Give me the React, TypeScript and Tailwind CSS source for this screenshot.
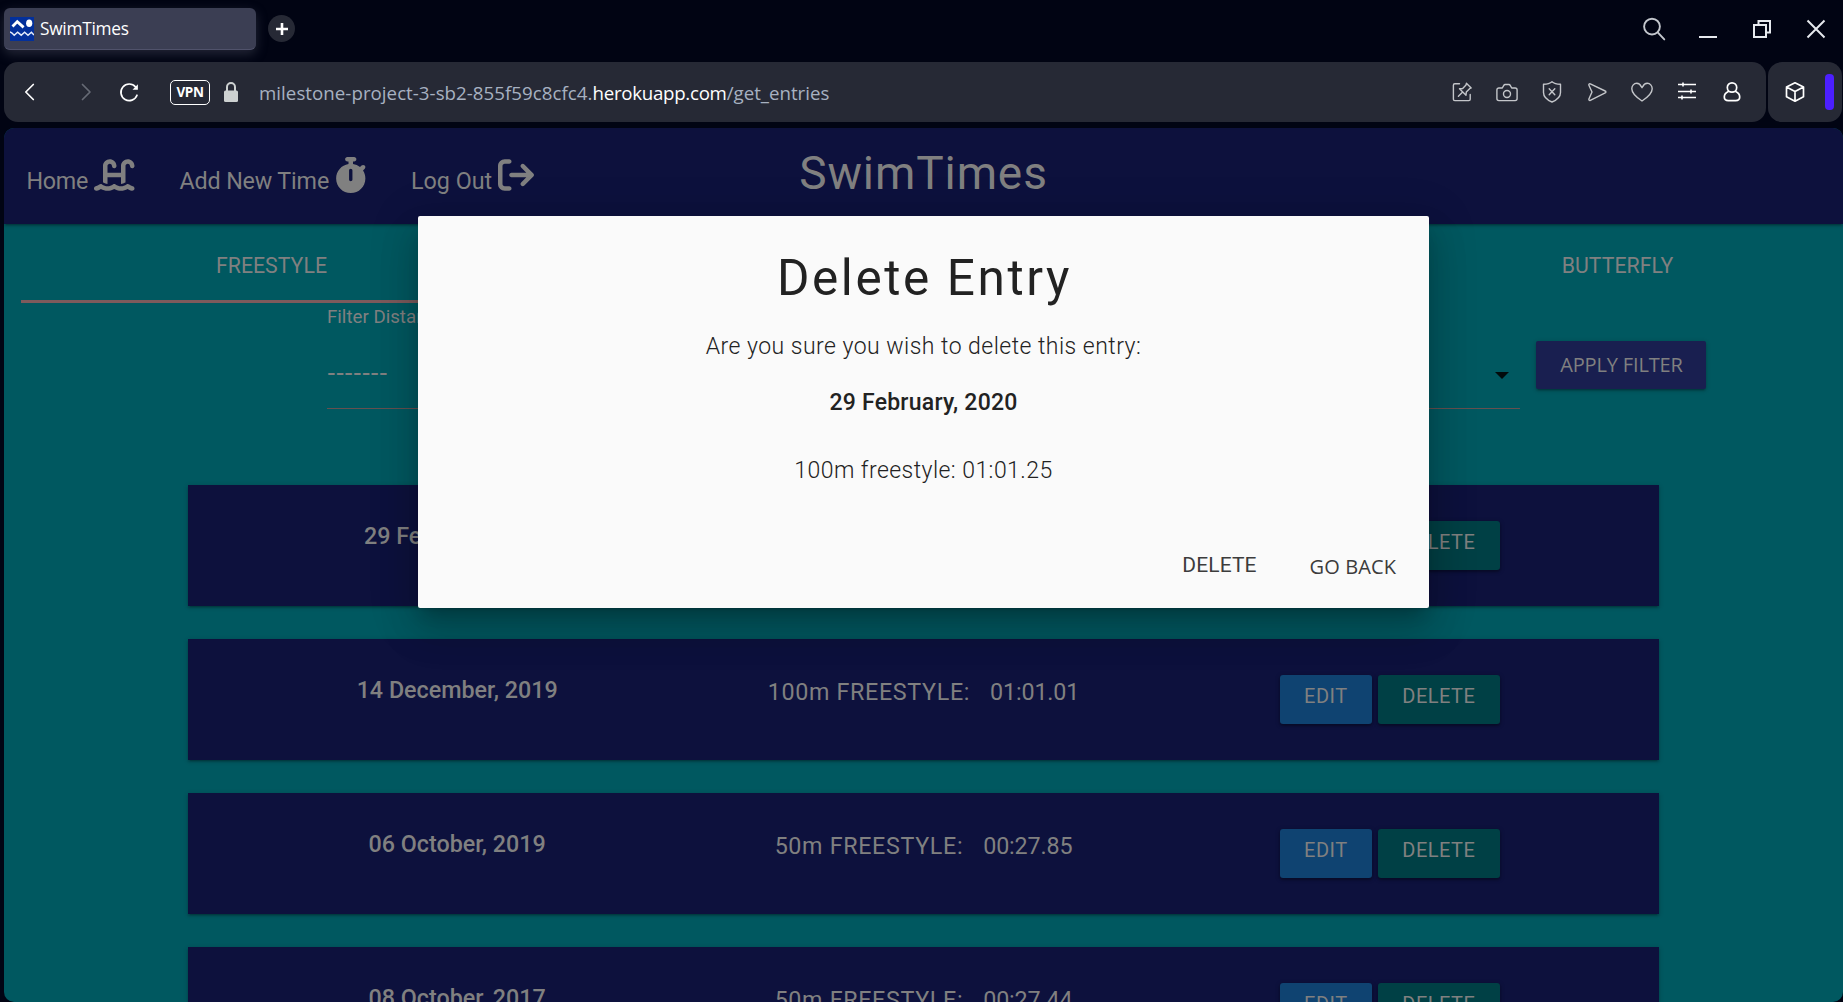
import type { ReactNode } from "react";
import { FaArrowRightFromBracket, FaStopwatch, FaWaterLadder } from "react-icons/fa6";

const entries = [
  { date: "29 February, 2020", distance: "100m", time: "01:01.25" },
  { date: "14 December, 2019", distance: "100m", time: "01:01.01" },
  { date: "06 October, 2019", distance: "50m", time: "00:27.85" },
  { date: "08 October, 2017", distance: "50m", time: "00:27.44" },
];

function Icon({ children, className = "" }: { children: ReactNode; className?: string }) {
  return (
    <svg
      viewBox="0 0 24 24"
      fill="none"
      stroke="currentColor"
      strokeWidth="1.4"
      strokeLinecap="round"
      strokeLinejoin="round"
      className={`size-6 shrink-0 ${className}`}
    >
      {children}
    </svg>
  );
}

function Favicon() {
  return (
    <svg viewBox="0 0 24 24" className="size-6 bg-[#03309b]" fill="none">
      <path d="M2.5 9.5 7.3 4.6 13.6 10.4" stroke="#fff" strokeWidth="2.8" />
      <ellipse cx="19.2" cy="6.3" rx="3.1" ry="3.8" fill="#fff" />
      <path
        d="M0 14.8 2 16l2.2 2.2 3.4-3 3.6 3 3.4-3 3.4 3 3.4-3L24 18"
        stroke="#e5ecfa"
        strokeWidth="1.5"
      />
    </svg>
  );
}

function TabStrip() {
  return (
    <div className="flex h-[62px] items-start pl-1 pr-[15px]">
      <div className="mt-2 flex h-[42px] w-[252px] items-center gap-1.5 rounded-md border-b border-[#50526b] bg-[#3b3e53] pl-1.5 shadow-[0_4px_12px_rgba(80,82,100,0.45)]">
        <Favicon />
        <span className="text-[17.3px] tracking-[-0.25px] text-white">SwimTimes</span>
      </div>
      <div className="ml-[12px] mt-[15px] flex size-[27px] items-center justify-center rounded-full bg-[#262935]">
        <svg viewBox="0 0 12 12" className="size-3" stroke="#fff" strokeWidth="2.6">
          <path d="M6 0v12M0 6h12" />
        </svg>
      </div>
      <div className="ml-auto mt-[17px] flex items-center gap-[30px] text-[#e6e9ee]">
        <Icon className="text-[#c3c7cd]">
          <g strokeWidth="1.9">
            <circle cx="10" cy="9.6" r="7.9" />
            <path d="m15.7 15.4 6.6 7" />
          </g>
        </Icon>
        <Icon>
          <path d="M3 20h18" strokeWidth="2" strokeLinecap="butt" />
        </Icon>
        <Icon>
          <g strokeWidth="2" strokeLinejoin="miter">
            <path d="M4 8h12v12H4z" />
            <path d="M8.500 8V4H20v11.500h-4" />
          </g>
        </Icon>
        <Icon>
          <path d="m3.500 3.500 17 17M20.500 3.500l-17 17" strokeWidth="2" strokeLinecap="butt" />
        </Icon>
      </div>
    </div>
  );
}

function AddressBar() {
  return (
    <div className="flex h-[60px] gap-[2px] pl-1">
      <div className="flex w-[1762px] items-center rounded-[14px] bg-[#262935] pr-[22px]">
        <Icon className="ml-[14px] text-white">
          <path d="M15.300 4.500 7.800 12l7.500 7.500" strokeWidth="1.7" />
        </Icon>
        <Icon className="ml-8 text-[#666a75]">
          <path d="m8.500 4.500 7.500 7.500-7.500 7.500" strokeWidth="1.7" />
        </Icon>
        <Icon className="ml-[19px] text-white">
          <path d="M20 15.200A8.300 8.300 0 1 1 18.600 7" strokeWidth="1.7" />
          <path d="M20.900 4.200v5.600h-5.400z" fill="currentColor" stroke="none" />
        </Icon>
        <div className="ml-[29px] flex h-[25px] w-10 items-center justify-center rounded-[5px] border border-white text-[13.5px] font-bold tracking-[-0.4px] text-white">
          VPN
        </div>
        <svg viewBox="0 0 14 20" className="ml-3.5 h-5 w-3.5" fill="none">
          <path d="M3 9.500V5a4 4 0 0 1 8 0v4.500" stroke="#cdd1d1" strokeWidth="2" />
          <rect y="8.500" width="14" height="11.500" rx="1.5" fill="#cdd1d1" />
        </svg>
        <div className="ml-[21px] mt-0.5 flex text-[18.7px] text-[#a7b1c1]">
          <span className="tracking-[0.04px]">milestone-project-3-sb2-855f59c8cfc4.</span>
          <span className="tracking-[-0.28px] text-white">herokuapp.com</span>
          <span>/get_entries</span>
        </div>
        <div className="ml-auto flex gap-[21px] text-[#c4c6ca]">
          <Icon>
            <path d="M9.500 3.800H4.800a1.400 1.400 0 0 0-1.400 1.400v14a1.400 1.400 0 0 0 1.400 1.400h14a1.400 1.400 0 0 0 1.400-1.400v-4.700" />
            <path d="m16.400 3.300 4.800 4.600-1.600.8-3.300 3.400-.3 3.100-6.500-6.400 3.200-.3 3.300-3.500zM12.700 12l-4.300 4.200" />
          </Icon>
          <Icon>
            <path d="M3.900 8h3.400l1.500-2.700a1.500 1.500 0 0 1 1.300-.8h3.800a1.500 1.500 0 0 1 1.300.8L16.700 8h3.400a2 2 0 0 1 2 2v8.600a2 2 0 0 1-2 2H3.900a2 2 0 0 1-2-2V10a2 2 0 0 1 2-2Z" />
            <circle cx="12" cy="14" r="3.500" />
          </Icon>
          <Icon>
            <path d="M12 1.700c2.300 2 5 2.400 8.500 2.500v8.300c0 4.500-3.700 7.500-8.500 9.500-4.800-2-8.500-5-8.500-9.500V4.200C7 4.100 9.700 3.700 12 1.700Z" />
            <path d="m9.200 8.700 5.600 6M14.800 8.700l-5.600 6" />
          </Icon>
          <Icon>
            <path d="M5.300 3.900 20.200 11a1 1 0 0 1 0 1.900L5.300 20.300c-.9.400-1.700-.4-1.400-1.300L7 12 3.900 5.200c-.4-.9.500-1.700 1.400-1.300Z" />
          </Icon>
          <Icon>
            <path d="M12 21c-4.800-3.100-10.200-7.300-10.200-12.200C1.800 5.700 4 3.300 6.700 3.300c2.300 0 3.800 1.500 4.600 3.400l.7 1 .7-1c.8-1.900 2.300-3.400 4.600-3.400 2.700 0 4.900 2.400 4.900 5.500C22.200 13.700 16.800 17.900 12 21Z" />
          </Icon>
          <Icon className="text-white">
            <path
              d="M3 4.500h18M3 11.500h18M3 17.500h18M8 2.500v4M16 9.500v4M7 15.500v4"
              strokeWidth="1.6"
              strokeLinecap="butt"
            />
          </Icon>
          <Icon className="text-white">
            <g strokeWidth="1.7">
              <circle cx="12" cy="7.500" r="4.700" />
              <path d="M8.300 11.500c-2.700 1.200-4 3.300-4 5.500 0 2.400 1.600 3.600 4 3.600h7.400c2.400 0 4-1.200 4-3.600 0-2.200-1.300-4.300-4-5.500" />
            </g>
          </Icon>
        </div>
      </div>
      <div className="flex w-[74px] items-center rounded-[14px] bg-[#262935] pl-[15px] text-white">
        <Icon>
          <path
            d="m12 2.800 8.500 4.300v9.700L12 21.200l-8.500-4.400V7.100zM3.500 7.100 12 11.500l8.500-4.400M12 11.500v9.700"
            strokeWidth="1.7"
          />
        </Icon>
        <div className="ml-[18px] h-9 w-[9px] rounded-[4px] bg-[#4c1fff]" />
      </div>
    </div>
  );
}

function SiteNav() {
  return (
    <nav className="relative grid h-24 grid-cols-[1fr_auto_1fr] bg-[#0d113d] text-[#808080] shadow-[0_2px_2px_rgba(0,0,0,0.14),0_3px_1px_-2px_rgba(0,0,0,0.12),0_1px_5px_rgba(0,0,0,0.2)]">
      <div className="flex items-start pl-[22.5px] pt-[29px] text-[23.3px] leading-6">
        <a className="flex">
          <span className="w-[67.5px] pt-3 tracking-[-0.3px]">Home</span>
          <FaWaterLadder className="h-9 w-[40.5px]" />
        </a>
        <a className="ml-[45px] flex">
          <span className="w-[155px] whitespace-nowrap pt-3 tracking-[-0.15px]">Add New Time</span>
          <FaStopwatch className="h-9 w-[31.5px]" />
        </a>
        <a className="ml-[45px] flex">
          <span className="w-[87px] pt-3">Log Out</span>
          <FaArrowRightFromBracket className="size-9" />
        </a>
      </div>
      <h1 className="pt-[18px] text-[46px] leading-[54px] tracking-[0.9px]">SwimTimes</h1>
      <div />
    </nav>
  );
}

function StrokeTabs() {
  return (
    <div className="ml-[17px] flex h-20 justify-between text-center text-[21.3px] leading-[83px] text-[#808080]">
      <div className="h-[79px] w-[475px] border-b-[3px] border-[#7d5a5c] pl-[26px]">FREESTYLE</div>
      <div className="w-[451px]">BUTTERFLY</div>
    </div>
  );
}

function FilterForm() {
  return (
    <div className="flex h-[181px] items-start gap-4 pl-[323px] text-[#808080]">
      <div className="h-[105px] w-[1193px] border-b border-[#65504f]">
        <div className="pt-px text-[18.7px] leading-6">Filter Distance</div>
        <div className="flex items-start justify-between pr-[11px] pt-[32px]">
          <span className="font-['DejaVu_Sans'] text-[24px] leading-6">-------</span>
          <svg viewBox="0 0 14 7" className="mt-[11px] h-[7px] w-3.5" fill="#020b0c">
            <path d="M0 0h14L7 7z" />
          </svg>
        </div>
      </div>
      <button className="mt-[37px] h-12 w-[170px] rounded-[2px] bg-[#191f50] pl-px font-['Open_Sans'] text-[20px] leading-[48px] tracking-[-0.15px] shadow-[0_2px_2px_rgba(0,0,0,0.14),0_3px_1px_-2px_rgba(0,0,0,0.12),0_1px_5px_rgba(0,0,0,0.2)]">
        APPLY FILTER
      </button>
    </div>
  );
}

function EntryCard({ date, distance, time }: { date: string; distance: string; time: string }) {
  return (
    <div className="grid h-[121px] shrink-0 grid-cols-3 bg-[#0d113d] px-9 text-center text-[23.3px] leading-[30px] text-[#808080] shadow-[0_2px_2px_rgba(0,0,0,0.14),0_3px_1px_-2px_rgba(0,0,0,0.12),0_1px_5px_rgba(0,0,0,0.2)]">
      <p className="pt-9 font-medium">{date}</p>
      <p className="flex justify-center gap-[20px] pt-[38px]">
        <span className="tracking-[0.65px]">{distance} FREESTYLE:</span>
        <span className="tracking-[-0.15px]">{time}</span>
      </p>
      <div className="flex justify-center gap-1.5 pt-9 text-[20px] leading-[43px] tracking-[0.5px]">
        <button className="flex h-[49px] w-[92px] justify-center rounded-[3px] bg-[#0f4371] shadow-[0_2px_2px_rgba(0,0,0,0.2),0_1px_5px_rgba(0,0,0,0.3)]">
          EDIT
        </button>
        <button className="flex h-[49px] w-[122px] justify-center rounded-[3px] bg-[#004045] shadow-[0_2px_2px_rgba(0,0,0,0.2),0_1px_5px_rgba(0,0,0,0.3)]">
          DELETE
        </button>
      </div>
    </div>
  );
}

function DeleteDialog() {
  return (
    <div
      role="dialog"
      className="absolute left-[414px] top-[88px] flex h-[392px] w-[1011px] flex-col rounded-[2px] bg-[#fafafa] pt-[31px] text-center text-[23px] leading-[30px] text-[#222] shadow-[0_24px_38px_3px_rgba(0,0,0,0.14),0_9px_46px_8px_rgba(0,0,0,0.12),0_11px_15px_-7px_rgba(0,0,0,0.2)]"
    >
      <h2 className="pl-[2px] text-[49.5px] leading-[63px] tracking-[2.6px]">Delete Entry</h2>
      <p className="mt-[22px] font-light tracking-[0.47px]">Are you sure you wish to delete this entry:</p>
      <p className="mt-[26px] font-medium tracking-[0.24px]">29 February, 2020</p>
      <p className="mt-[38px] font-light tracking-[0.45px]">100m freestyle: 01:01.25</p>
      <div className="mt-[64px] flex justify-end gap-[53px] pr-[33px] text-[#3c3c3c]">
        <button className="h-[30px] text-[21px] tracking-[0.1px]">DELETE</button>
        <button className="mt-0.5 h-[30px] font-['Open_Sans'] text-[20px] tracking-[0.1px]">GO BACK</button>
      </div>
    </div>
  );
}

export default function App() {
  return (
    <div className="flex h-[1002px] w-[1843px] flex-col overflow-hidden bg-[#010413] font-['Open_Sans',sans-serif]">
      <TabStrip />
      <AddressBar />
      <main className="relative ml-1 mt-1.5 h-[874px] overflow-hidden rounded-[10px] bg-[#005860] font-['Roboto',sans-serif]">
        <SiteNav />
        <StrokeTabs />
        <FilterForm />
        <div className="flex w-[1655px] flex-col gap-[33px] pl-[184px]">
          {entries.map((entry) => (
            <EntryCard key={entry.date} {...entry} />
          ))}
        </div>
        <DeleteDialog />
      </main>
    </div>
  );
}
